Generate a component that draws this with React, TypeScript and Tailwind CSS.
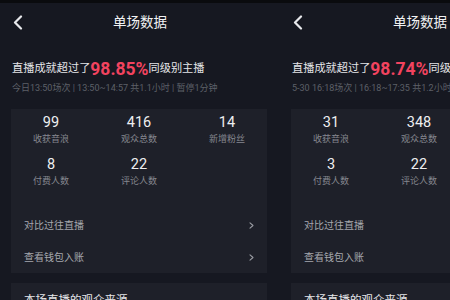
const font = { fontFamily: '"Roboto","Noto Sans CJK SC",sans-serif' };

type Stat = { value: string; label: string };

function Chevron() {
  return (
    <svg width="10" height="15" viewBox="0 0 10 15" fill="none">
      <path d="M8 1.5L2 7.5L8 13.5" stroke="#e8e9ec" strokeWidth="2.2" strokeLinecap="round" strokeLinejoin="round" />
    </svg>
  );
}

function SmallArrow() {
  return (
    <svg width="5" height="7" viewBox="0 0 5 7" fill="none">
      <path d="M1 0.8L4 3.5L1 6.2" stroke="#9a9ca3" strokeWidth="1.1" strokeLinecap="round" strokeLinejoin="round" />
    </svg>
  );
}

function StatCell({ value, label }: Stat) {
  return (
    <div className="flex flex-col items-center">
      <p className="text-[14.5px] leading-[16px] text-[#eeeff1]">{value}</p>
      <p className="mt-[2px] text-[9px] leading-[12px] text-[#85878f]">{label}</p>
    </div>
  );
}

function Phone({
  percent,
  sub,
  stats,
}: {
  percent: string;
  sub: string;
  stats: Stat[];
}) {
  return (
    <div className="w-[280px] flex-none bg-[#161821]">
      <div className="h-[3px] bg-[#0a0b0e]" />
      <div className="grid h-[38px] grid-cols-[1fr_auto_1fr] items-center">
        <div className="pl-[13px] pt-[1px]">
          <Chevron />
        </div>
        <p className="text-[13.5px] text-[#f1f2f4]">单场数据</p>
        <div />
      </div>

      <div className="mt-[18px] flex h-[20px] items-center whitespace-nowrap pl-[12px]">
        <span className="text-[11.2px] text-[#e4e5e8]">直播成就超过了</span>
        <span className="text-[17.5px] font-bold text-[#f2435f]">{percent}</span>
        <span className="text-[11.2px] text-[#e4e5e8]">同级别主播</span>
      </div>
      <p className="mt-[3px] h-[12px] whitespace-nowrap pl-[12px] text-[9px] leading-[12px] text-[#5d6068]">
        {sub}
      </p>

      <div className="ml-[11px] mt-[15px] w-[256px] bg-[#1e2029] pt-[6px]">
        <div className="grid grid-cols-[88px_88px_88px] justify-center gap-y-[12px]">
          {stats.map((s) => (
            <StatCell key={s.label} value={s.value} label={s.label} />
          ))}
        </div>
        <div className="mt-[22px]">
          <div className="flex h-[32px] items-center justify-between pl-[13px] pr-[13px]">
            <span className="text-[10px] text-[#a6a8ae]">对比过往直播</span>
            <SmallArrow />
          </div>
          <div className="flex h-[32px] items-center justify-between pl-[13px] pr-[13px]">
            <span className="text-[10px] text-[#a6a8ae]">查看钱包入账</span>
            <SmallArrow />
          </div>
        </div>
      </div>

      <div className="ml-[11px] mt-[10px] h-[40px] w-[256px] bg-[#1e2029] pl-[13px] pt-[10px]">
        <p className="text-[11.5px] leading-[14px] text-[#e6e7ea]">本场直播的观众来源</p>
      </div>
    </div>
  );
}

export default function App() {
  return (
    <div className="flex h-[300px] w-[450px] overflow-hidden bg-[#161821]" style={font}>
      <Phone
        percent="98.85%"
        sub="今日13:50场次 | 13:50~14:57 共1.1小时 | 暂停1分钟"
        stats={[
          { value: "99", label: "收获音浪" },
          { value: "416", label: "观众总数" },
          { value: "14", label: "新增粉丝" },
          { value: "8", label: "付费人数" },
          { value: "22", label: "评论人数" },
        ]}
      />
      <Phone
        percent="98.74%"
        sub="5-30 16:18场次 | 16:18~17:35 共1.2小时 | 暂停0分钟"
        stats={[
          { value: "31", label: "收获音浪" },
          { value: "348", label: "观众总数" },
          { value: "9", label: "新增粉丝" },
          { value: "3", label: "付费人数" },
          { value: "22", label: "评论人数" },
        ]}
      />
    </div>
  );
}
